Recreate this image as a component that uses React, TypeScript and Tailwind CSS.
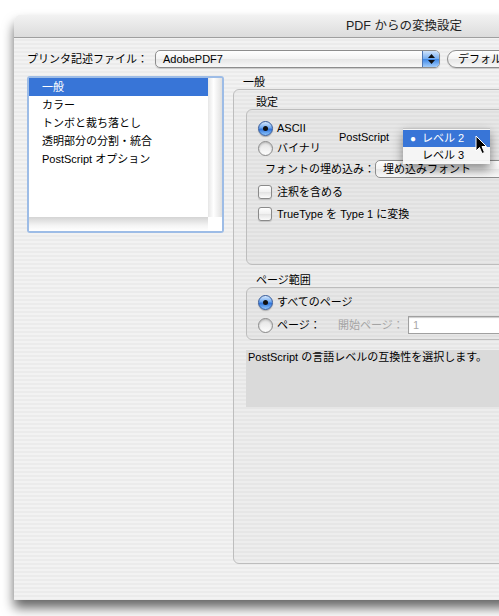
import React from "react";

const listItems = ["一般", "カラー", "トンボと裁ち落とし", "透明部分の分割・統合", "PostScript オプション"];

function Radio({ on = false }: { on?: boolean }) {
  if (on) {
    return (
      <span className="flex h-[15px] w-[15px] shrink-0 items-center justify-center rounded-full border border-[#34599a] bg-[linear-gradient(to_bottom,#d5e8fd_0%,#6fa8f0_45%,#2f74dc_55%,#8cc3fb_100%)] shadow-[0_1px_1px_rgba(0,0,0,0.25)]">
        <span className="h-[5px] w-[5px] rounded-full bg-[#111]" />
      </span>
    );
  }
  return (
    <span className="h-[15px] w-[15px] shrink-0 rounded-full border border-[#8a8a8a] bg-[linear-gradient(to_bottom,#e2e2e2,#fdfdfd)] shadow-[inset_0_1px_2px_rgba(0,0,0,0.2)]" />
  );
}

function Checkbox() {
  return (
    <span className="h-[14px] w-[14px] shrink-0 rounded-[3px] border border-[#8a8a8a] bg-[linear-gradient(to_bottom,#ffffff,#f0f0f0_50%,#e2e2e2_51%,#fbfbfb)] shadow-[0_1px_1px_rgba(0,0,0,0.15)]" />
  );
}

function Stepper() {
  return (
    <span className="flex w-[17px] shrink-0 flex-col items-center justify-center gap-[2px] rounded-r-[4px] border-l border-[#4f77b4] bg-[linear-gradient(to_bottom,#cfe3fb,#77aef1_48%,#3f88e6_52%,#a3cdfb)]">
      <svg width="7" height="4" viewBox="0 0 7 4">
        <path d="M0 4 L3.5 0 L7 4 Z" fill="#111" />
      </svg>
      <svg width="7" height="4" viewBox="0 0 7 4">
        <path d="M0 0 L3.5 4 L7 0 Z" fill="#111" />
      </svg>
    </span>
  );
}

export default function App() {
  return (
    <div className="h-[616px] w-[499px] overflow-hidden bg-white pl-[14px] pt-[15px] font-['Liberation_Sans','Noto_Sans_CJK_JP',sans-serif] text-[11px] text-black">
      <div className="relative flex h-[585px] w-[780px] flex-col overflow-hidden rounded-t-[7px] bg-[repeating-linear-gradient(to_bottom,#ebebeb_0px,#ebebeb_2px,#f2f2f2_2px,#f2f2f2_4px)] shadow-[0_8px_12px_rgba(0,0,0,0.6)]">
        {/* Title bar */}
        <div className="flex h-[23px] shrink-0 items-center justify-center border-b border-[#9f9f9f] bg-[linear-gradient(to_bottom,#f2f2f2,#dcdcdc)] text-[12.5px] text-[#222]">
          PDF からの変換設定
        </div>

        <div className="flex flex-col pl-[13px] pr-[14px] pt-[12px]">
          {/* Printer description row */}
          <div className="flex h-[18px] items-center">
            <span className="w-[128px] shrink-0">プリンタ記述ファイル：</span>
            <div className="flex h-[18px] w-[285px] shrink-0 items-stretch rounded-[5px] border border-[#8d8d8d] bg-[linear-gradient(to_bottom,#ffffff,#f3f3f3_50%,#e6e6e6_51%,#f8f8f8)] shadow-[0_1px_1px_rgba(0,0,0,0.15)]">
              <span className="flex-1 pl-[7px] leading-[16px]">AdobePDF7</span>
              <Stepper />
            </div>
            <div className="ml-[7px] flex h-[18px] shrink-0 items-center rounded-full border border-[#8d8d8d] bg-[linear-gradient(to_bottom,#ffffff,#f3f3f3_50%,#e6e6e6_51%,#f8f8f8)] px-[10px] shadow-[0_1px_1px_rgba(0,0,0,0.15)]">
              デフォルト
            </div>
          </div>

          <div className="mt-[8px] flex gap-[9px]">
            {/* Panel list */}
            <div className="h-[157px] w-[197px] shrink-0 rounded-[3px] bg-[#9dbce6] p-[2px]">
              <div className="flex h-full w-full flex-col bg-white">
                <div className="flex flex-1">
                  <div className="flex flex-1 flex-col">
                    {listItems.map((item, i) => (
                      <div
                        key={item}
                        className={
                          i === 0
                            ? "flex h-[18px] items-center bg-[#3875d7] pl-[13px] text-white"
                            : "flex h-[18px] items-center pl-[13px]"
                        }
                      >
                        {item}
                      </div>
                    ))}
                  </div>
                  <div className="w-[14px] bg-[linear-gradient(to_right,#e6e6e6,#ffffff_40%,#e0e0e0)]" />
                </div>
                <div className="flex h-[14px]">
                  <div className="flex-1 bg-[linear-gradient(to_bottom,#d4d4d4,#f4f4f4_60%,#ffffff)]" />
                  <div className="w-[14px] bg-white" />
                </div>
              </div>
            </div>

            {/* Right side */}
            <div className="flex flex-1 flex-col">
              <div className="h-[13px] pl-[10px] leading-[12px]">一般</div>
              <div className="h-[475px] rounded-[6px] border border-[#bdbdbd] bg-black/[0.02] pl-[12px] pr-[12px] pt-[6px]">
                <div className="h-[13px] pl-[10px] leading-[13px]">設定</div>

                {/* Settings group */}
                <div className="relative h-[156px] rounded-[6px] border border-[#bdbdbd] bg-black/[0.025] pl-[11px] pt-[10px]">
                  <div className="flex items-center">
                    <div className="flex w-[81px] flex-col gap-[4px]">
                      <div className="flex h-[16px] items-center gap-[4px]">
                        <Radio on />
                        <span>ASCII</span>
                      </div>
                      <div className="flex h-[16px] items-center gap-[4px]">
                        <Radio />
                        <span>バイナリ</span>
                      </div>
                    </div>
                    <span className="mb-[2px]">PostScript</span>
                  </div>
                  <div className="mt-[4px] flex h-[18px] items-center pl-[7px]">
                    <span className="w-[110px] shrink-0">フォントの埋め込み：</span>
                    <div className="flex h-[18px] w-[220px] shrink-0 items-center rounded-[5px] border border-[#8d8d8d] bg-[linear-gradient(to_bottom,#ffffff,#f3f3f3_50%,#e6e6e6_51%,#f8f8f8)] pl-[7px]">
                      埋め込みフォント
                    </div>
                  </div>
                  <div className="mt-[6px] flex h-[16px] items-center gap-[5px]">
                    <Checkbox />
                    <span>注釈を含める</span>
                  </div>
                  <div className="mt-[6px] flex h-[16px] items-center gap-[5px]">
                    <Checkbox />
                    <span>TrueType を Type 1 に変換</span>
                  </div>

                  {/* Open PostScript level menu */}
                  <div className="absolute left-[156px] top-[18px] h-[36px] w-[87px] border-t border-[#c4c4c4] bg-[#f6f6f6]/95 pt-[1px] shadow-[0_5px_10px_rgba(0,0,0,0.45)]">
                    <div className="relative flex h-[17px] items-center bg-[#3875d7] pl-[19px] text-white">
                      <span className="absolute left-[7px] text-[10px]">●</span>
                      レベル 2
                    </div>
                    <div className="flex h-[17px] items-center pl-[19px]">レベル 3</div>
                  </div>
                  <svg className="absolute left-[228px] top-[25px]" width="13" height="20" viewBox="0 0 13 20">
                    <path d="M1 1 L1 16 L4.5 12.5 L7 18.5 L9.5 17.5 L7 11.5 L11.5 11.5 Z" fill="#000" stroke="#fff" strokeWidth="1" />
                  </svg>
                </div>

                <div className="mt-[9px] h-[13px] pl-[10px] leading-[13px]">ページ範囲</div>

                {/* Page range group */}
                <div className="h-[53px] rounded-[6px] border border-[#bdbdbd] bg-black/[0.025] pl-[11px] pt-[6px]">
                  <div className="flex h-[16px] items-center gap-[4px]">
                    <Radio on />
                    <span>すべてのページ</span>
                  </div>
                  <div className="mt-[6px] flex h-[18px] items-center">
                    <Radio />
                    <span className="ml-[4px] w-[61px]">ページ：</span>
                    <span className="w-[70px] text-[#a4a4a4]">開始ページ：</span>
                    <div className="flex h-[18px] w-[140px] items-center border border-[#a0a0a0] bg-white pl-[4px] text-[#a8a8a8] shadow-[inset_0_1px_1px_rgba(0,0,0,0.2)]">
                      1
                    </div>
                  </div>
                </div>

                {/* Description */}
                <div className="mt-[9px] h-[58px] border-t border-[#eeeeee] bg-[#dadada] pl-[2px] leading-[14px]">
                  PostScript の言語レベルの互換性を選択します。
                </div>
              </div>
            </div>
          </div>
        </div>
      </div>
    </div>
  );
}
